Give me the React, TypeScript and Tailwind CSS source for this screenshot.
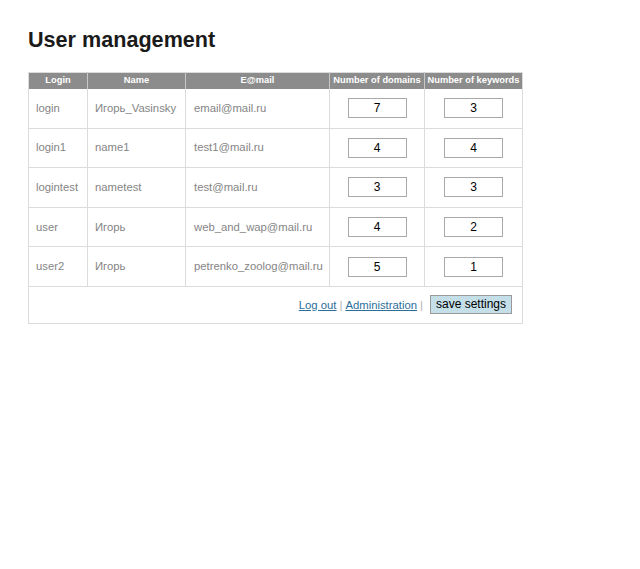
import React from "react";

const rows = [
  { login: "login", name: "Игорь_Vasinsky", email: "email@mail.ru", d: 7, k: 3 },
  { login: "login1", name: "name1", email: "test1@mail.ru", d: 4, k: 4 },
  { login: "logintest", name: "nametest", email: "test@mail.ru", d: 3, k: 3 },
  { login: "user", name: "Игорь", email: "web_and_wap@mail.ru", d: 4, k: 2 },
  { login: "user2", name: "Игорь", email: "petrenko_zoolog@mail.ru", d: 5, k: 1 },
];

export default function App() {
  return (
    <div className="w-[640px] h-[569px] bg-white pl-[28px] pt-[26px] font-['Liberation_Sans',Arial,sans-serif]">
      <h1 className="text-[21.6px] leading-[28px] font-bold text-[#1a1a1a]">User management</h1>
      <table className="mt-[18px] w-[494px] table-fixed border-collapse border border-[#dcdcdc] text-[11.3px] text-[#858585]">
        <colgroup>
          <col className="w-[59px]" />
          <col className="w-[98px]" />
          <col className="w-[144px]" />
          <col className="w-[95px]" />
          <col className="w-[98px]" />
        </colgroup>
        <thead>
          <tr className="h-[16px] bg-[#8c8c8c] text-white text-[9.3px] font-bold">
            <th className="border-r border-[#c8c8c8] p-0 text-center">Login</th>
            <th className="border-r border-[#c8c8c8] p-0 text-center">Name</th>
            <th className="border-r border-[#c8c8c8] p-0 text-center">E@mail</th>
            <th className="border-r border-[#c8c8c8] p-0 text-center whitespace-nowrap">Number of domains</th>
            <th className="p-0 text-center whitespace-nowrap">Number of keywords</th>
          </tr>
        </thead>
        <tbody>
          {rows.map((r, i) => (
            <tr key={i} className="h-[39.6px] border-b border-[#dcdcdc]">
              <td className="border-r border-[#dcdcdc] pl-[7px] whitespace-nowrap">{r.login}</td>
              <td className="border-r border-[#dcdcdc] pl-[7px] whitespace-nowrap">{r.name}</td>
              <td className="border-r border-[#dcdcdc] pl-[8px] whitespace-nowrap">{r.email}</td>
              <td className="border-r border-[#dcdcdc] text-center">
                <div className="mx-auto w-[59px] h-[20px] border border-[#a9a9a9] bg-white text-black text-[12px] leading-[18px] text-center">{r.d}</div>
              </td>
              <td className="text-center">
                <div className="mx-auto w-[59px] h-[20px] border border-[#a9a9a9] bg-white text-black text-[12px] leading-[18px] text-center">{r.k}</div>
              </td>
            </tr>
          ))}
          <tr className="h-[37px]">
            <td colSpan={5} className="pr-[10px]">
              <div className="flex items-center justify-end gap-[3px] text-[11.3px]">
                <a className="text-[#2b6f9a] underline" href="#">Log out</a>
                <span className="text-[#b0b0b0]">|</span>
                <a className="text-[#2b6f9a] underline" href="#">Administration</a>
                <span className="text-[#b0b0b0]">|</span>
                <span className="ml-[4px] h-[19px] px-[5px] border border-[#9a9a9a] bg-[#c5dfe9] text-black text-[12px] leading-[17px]">save settings</span>
              </div>
            </td>
          </tr>
        </tbody>
      </table>
    </div>
  );
}
